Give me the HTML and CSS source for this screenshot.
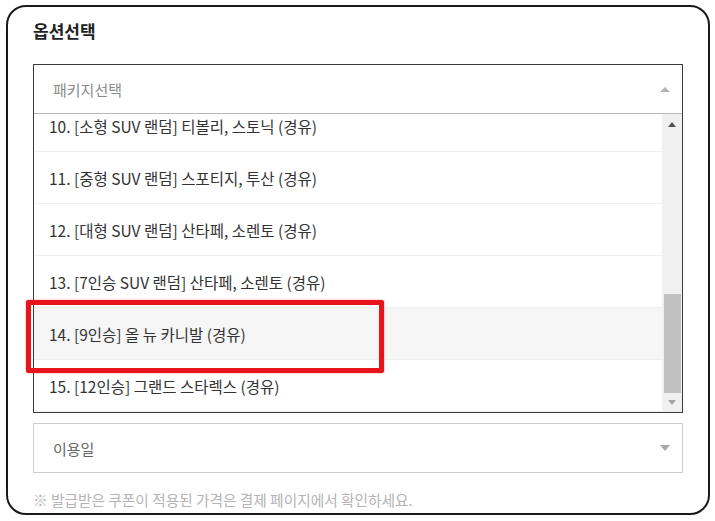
FILE: index.html
```html
<!DOCTYPE html>
<html>
<head>
  <meta charset="utf-8">
  <title>옵션선택</title>
  <link rel="stylesheet" href="styles.css">
</head>
<body>
  <div class="frame">
    <h2 class="title">옵션선택</h2>

    <div class="select package">
      <div class="select-head">
        <span class="placeholder">패키지선택</span>
        <span class="arrow-up"></span>
      </div>
      <div class="list-wrap">
        <ul class="option-list" id="option-list">
          <li>1. [경차 랜덤] 모닝, 레이 (휘발유)</li>
          <li>2. [소형 랜덤] 아반떼 (휘발유)</li>
          <li>3. [중형 랜덤] 쏘나타, K5 (휘발유)</li>
          <li>4. [중형 랜덤] 쏘나타, K5 (LPG)</li>
          <li>5. [준대형 랜덤] 그랜저, K8 (휘발유)</li>
          <li>6. [준대형 랜덤] 그랜저, K8 (LPG)</li>
          <li>7. [대형 랜덤] G80 (휘발유)</li>
          <li>8. [전기차 랜덤] 아이오닉5, EV6</li>
          <li>9. [경형 SUV 랜덤] 캐스퍼 (휘발유)</li>
          <li>10. [소형 SUV 랜덤] 티볼리, 스토닉 (경유)</li>
          <li>11. [중형 SUV 랜덤] 스포티지, 투산 (경유)</li>
          <li>12. [대형 SUV 랜덤] 산타페, 소렌토 (경유)</li>
          <li>13. [7인승 SUV 랜덤] 산타페, 소렌토 (경유)</li>
          <li class="hover">14. [9인승] 올 뉴 카니발 (경유)</li>
          <li>15. [12인승] 그랜드 스타렉스 (경유)</li>
        </ul>
        <div class="scrollbar">
          <div class="sb-btn"><span class="sb-up"></span></div>
          <div class="sb-space"></div>
          <div class="sb-thumb"></div>
          <div class="sb-btn sb-btn-down"><span class="sb-down"></span></div>
        </div>
      </div>
      <div class="highlight"></div>
    </div>

    <div class="select date">
      <span class="placeholder date-text">이용일</span>
      <span class="arrow-down"></span>
    </div>

    <p class="note">※ 발급받은 쿠폰이 적용된 가격은 결제 페이지에서 확인하세요.</p>
  </div>

  <script>
    // scroll the option list to the end
    var list = document.getElementById("option-list");
    list.scrollTop = list.scrollHeight - list.clientHeight;
  </script>
</body>
</html>
```

FILE: styles.css
```css
body {
  margin: 0;
  background-color: #fff;
  font-family: "Noto Sans CJK KR", "Noto Sans", sans-serif;
  color: #333;
}

.frame {
  margin: 5px 0 0 6px;
  width: 704px;
  height: 510px;
  box-sizing: border-box;
  border: 2px solid #1a1a1a;
  border-radius: 20px;
  padding: 0 25px 0 25px;
  overflow: hidden;
}

.title {
  margin: 12px 0 0 0;
  font-size: 17px;
  line-height: 24px;
  font-weight: bold;
  color: #222;
  height: 45px;
}

.select {
  position: relative;
  width: 650px;
  box-sizing: border-box;
}

.package {
  border: 1px solid #3a3a3a;
}

.select-head {
  height: 48px;
  border-bottom: 1px solid #b8b8b8;
  display: flex;
  align-items: center;
  justify-content: space-between;
  padding: 0 12px 0 19px;
}

.placeholder {
  font-size: 15px;
  color: #8c8c8c;
}

.arrow-up {
  width: 0;
  height: 0;
  border-left: 5.5px solid transparent;
  border-right: 5.5px solid transparent;
  border-bottom: 5px solid #b4b4b4;
}

.arrow-down {
  width: 0;
  height: 0;
  border-left: 5.5px solid transparent;
  border-right: 5.5px solid transparent;
  border-top: 6px solid #a8a8a8;
}

.list-wrap {
  display: flex;
  height: 298px;
}

.option-list {
  flex: 1;
  margin: 0;
  padding: 0;
  list-style: none;
  overflow: hidden;
}

.option-list li {
  height: 52px;
  box-sizing: border-box;
  border-bottom: 1px solid #efefef;
  padding-left: 15px;
  display: flex;
  align-items: center;
  font-size: 15.5px;
  color: #333;
  white-space: nowrap;
}

.option-list li.hover {
  background-color: #f6f6f6;
}

.scrollbar {
  width: 20px;
  background-color: #f0f0f0;
  display: flex;
  flex-direction: column;
}

.sb-btn {
  height: 20px;
  display: flex;
  align-items: center;
  justify-content: center;
}

.sb-btn-down {
  height: 19px;
}

.sb-space {
  flex: 1;
}

.sb-thumb {
  height: 99px;
  width: 17px;
  margin-left: 2px;
  background-color: #c1c1c1;
}

.sb-up {
  width: 0;
  height: 0;
  border-left: 4.5px solid transparent;
  border-right: 4.5px solid transparent;
  border-bottom: 5px solid #505050;
}

.sb-down {
  width: 0;
  height: 0;
  border-left: 4.5px solid transparent;
  border-right: 4.5px solid transparent;
  border-top: 5px solid #a3a3a3;
}

.highlight {
  position: absolute;
  left: -8px;
  top: 235px;
  width: 358px;
  height: 73px;
  box-sizing: border-box;
  border: 5px solid #e8141b;
  border-radius: 2px;
  box-shadow: 0 0 2px rgba(232, 20, 27, 0.5);
}

.date {
  margin-top: 10px;
  height: 50px;
  border: 1px solid #cdcdcd;
  display: flex;
  align-items: center;
  justify-content: space-between;
  padding: 0 12px 0 19px;
}

.date-text {
  color: #666;
}

.note {
  margin: 17px 0 0 0;
  font-size: 14.7px;
  line-height: 20px;
  color: #b4b4b4;
}
```
